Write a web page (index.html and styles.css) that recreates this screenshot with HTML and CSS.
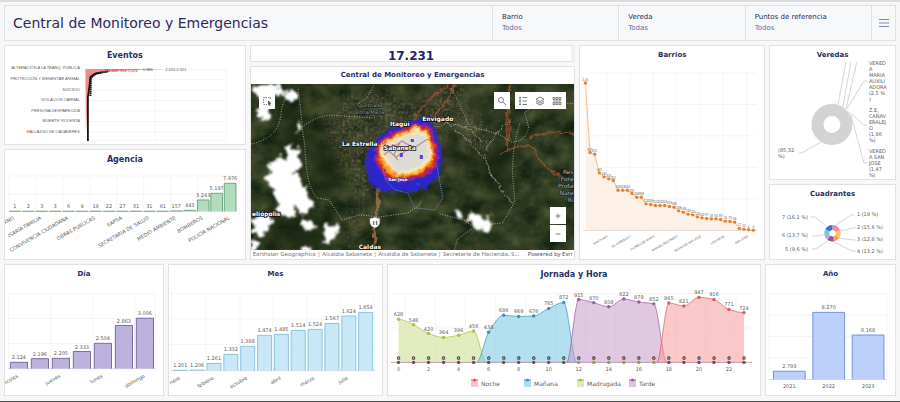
FILE: index.html
```html
<!DOCTYPE html>
<html lang="es">
<head>
<meta charset="utf-8">
<meta name="viewport" content="width=device-width, initial-scale=1">
<title>Central de Monitoreo y Emergencias</title>
<link rel="stylesheet" href="styles.css">
</head>
<body>
<header class="topbar">
  <h1>Central de Monitoreo y Emergencias</h1>
  <button class="filter" type="button"><span>Barrio</span><span class="value">Todos</span></button>
  <button class="filter" type="button"><span>Vereda</span><span class="value">Todas</span></button>
  <button class="filter" type="button"><span>Puntos de referencia</span><span class="value">Todos</span></button>
  <button class="menu" type="button" aria-label="Menú"><svg viewBox="0 0 10 8"><path d="M0 .5h10M0 4h10M0 7.500h10"/></svg></button>
</header>
<main>
  <div class="row upper">
    <div class="stack">
      <section class="card"><h2 class="large">Eventos</h2><svg id="eventos" viewBox="5 66 240 79"></svg></section>
      <section class="card"><h2 class="large">Agencia</h2><svg id="agencia" viewBox="5 171 240 89"></svg></section>
    </div>
    <div class="stack">
      <section class="card kpi">17.231</section>
      <section class="card mapcard">
        <h2>Central de Monitoreo y Emergencias</h2>
        <div class="map">
          <svg id="mapa" viewBox="251 83 324 168" preserveAspectRatio="xMidYMid slice">
            <defs>
              <filter id="terrain" x="0" y="0" width="100%" height="100%" color-interpolation-filters="sRGB">
                <feTurbulence type="fractalNoise" baseFrequency=".05 .06" numOctaves="6" seed="8"/>
                <feColorMatrix values=".35 .1 0 0 -.04  .3 .12 0 0 .02  .2 .08 0 0 -.01  0 0 0 0 1"/>
              </filter>
              <filter id="grain" x="0" y="0" width="100%" height="100%" color-interpolation-filters="sRGB">
                <feTurbulence type="fractalNoise" baseFrequency=".35" numOctaves="3" seed="3" result="n"/>
                <feColorMatrix in="n" values=".6 0 0 0 .1  .55 0 0 0 .08  .4 0 0 0 .08  0 2 0 0 -.5" result="c"/>
                <feGaussianBlur in="SourceAlpha" stdDeviation="6" result="a"/>
                <feComposite in="c" in2="a" operator="in"/>
              </filter>
              <filter id="cloud" x="-20%" y="-20%" width="140%" height="140%">
                <feTurbulence type="fractalNoise" baseFrequency=".13" numOctaves="4" seed="5"/>
                <feDisplacementMap in="SourceGraphic" scale="13" xChannelSelector="R" yChannelSelector="G"/>
                <feGaussianBlur stdDeviation=".8"/>
              </filter>
              <filter id="rough" x="-10%" y="-10%" width="120%" height="120%">
                <feTurbulence type="fractalNoise" baseFrequency=".16" numOctaves="3" seed="2"/>
                <feDisplacementMap in="SourceGraphic" scale="6" xChannelSelector="R" yChannelSelector="G"/>
              </filter>
              <filter id="soft"><feGaussianBlur stdDeviation="1.2"/></filter>
              <filter id="shade"><feGaussianBlur stdDeviation="7"/></filter>
            </defs>
            <rect x="251" y="83" width="324" height="168" fill="#2c3821"/>
            <rect x="251" y="83" width="324" height="168" filter="url(#terrain)" opacity=".9"/>
            <g fill="#14200f" opacity=".6" filter="url(#shade)">
              <path d="M283 85l20 2 6 65-16 30-14-30zM305 150l32-16 10 50-22 20zM478 150l28-16 10 40-18 32-15-25zM255 235l50-30 30 40-60 10z"/>
            </g>
            <g filter="url(#grain)" opacity=".6">
              <path d="M340 96l45-5 25 12 40-24 22 4-18 32-14 35-42 18-32 30-10 52h-10l8-60-30-55zM450 100l38 20 5 35-30-8z"/>
            </g>
            <g fill="none" stroke="#a75235" opacity=".7" filter="url(#rough)">
              <path d="M456 83q-10 28-40 46M450 84q-22 14-40 40M510 84q-4 30-3 60M500 155q22-14 34-6 10 22 28 28M508 95q4 25 0 55M530 138q20-8 45-4" stroke-width="1.800"/>
              <path d="M378 188q2 20-4 40l2 22" stroke="#b97852" stroke-width="3"/>
              <path d="M455 130q20 14 30 30M428 132q30-20 55 10M487 150q10-20 24-30M485 155q5 24 28 48" stroke="#a9a79b"/>
            </g>
            <g fill="#0c120a" opacity=".7" filter="url(#cloud)"><path d="M447 213l14 3 16 12-6 2-20-8zM285 92l12 4-4 12zM300 200l10 8-2 10z"/></g>
            <g fill="#fff" filter="url(#cloud)">
              <path d="M252 86l28-2 4 9-12 6-18-2zM286 88l8 2 4 8-6 4-8-7zM258 108l11-3 4 10-13 6zM286 148l13-3 3 20-8 10-8-8zM270 165l14-9 8 18 12 6 9 27-12 7-6-12-2 16-14-4-5-22-8-12zM252 218l18-4 3 11-14 14-8-8zM302 219l9-1 2 10-10 4zM326 227l12-5 1 12-10 11-6-7zM299 121l4 8-6 2zM470 214l10 1 4 4 7-7v12l-5 8-10-5-8-8zM454 211l9 2-4 7zM251 238l5 2 2 11h-7zM302 246l6 1v4h-6z"/>
            </g>
            <g fill="none" stroke="#d6d8c9" stroke-width=".7" stroke-dasharray="1 1.500">
              <path d="M251 144q28-6 30-30 2-18 12-22M298 89q4 30 4 37l3 20q1 40 12 52l12 2 10 15 3 5 18-5 20 2 28-4 12-8 1-4"/>
              <path d="M302 127q18-15 42-11l32 2M375 83l-8 15-10 6M451 88q12 20 18 38l30 8 13 8q14 0 17-15l-4-15 20-12 30 4M520 124q-8 25-7 52l2 26-12 21q-20 2-28 4l-17 12-4 12M440 214l24 6 8 6"/>
            </g>
            <g filter="url(#rough)">
              <g filter="url(#soft)">
                <path d="M371 147l18-16 26-11 14 2 8 16 4 20-4 18-12 11-14 4-16-2-13 1-12-10-3-18z" fill="#2a26c9" stroke="#2a26c9" stroke-width="3"/>
                <path d="M375 147l16-13 24-10 13 2 7 14 3 17-5 12-11 8-18 4-16-1-11-17z" fill="#d32313"/>
                <path d="M378 147l15-10 23-10 11 3 5 13 3 12-5 11-11 8-20 4-11-5-9-15z" fill="#ff9d1c"/>
                <path d="M380 147l15-8 21-10 10 3 4 12 2 11-5 9-10 7-18 4-9-7-8-12z" fill="#fff3b0"/>
                <path d="M382 147l15-7 20-9 8 4 3 10 1 10-5 8-9 6-17 4-7-7-7-11z" fill="#dedbd7"/>
              </g>
            </g>
            <path d="M384 155l18-14 12 7 14-9M388 150l8 7 18-11M400 143l-6 12 4 5" fill="none" stroke="#a77768" stroke-width="1.200" opacity=".75"/>
            <path d="M384 167q-2 13 12 23l12 3 7 15 20 2 8-12-6-33" fill="none" stroke="#6f93d8" stroke-width=".9" stroke-dasharray="1 1"/>
            <g fill="#5a3fe0"><path d="M411 139h3v3h-3zM420 155h3v4h-3zM400 153h3v4h-3zM417 183h2v2h-2zM384 169h2v3h-2z"/></g>
            <path d="M370 218q2 1 5-1 3 2 5 1v5q-1 4-5 5-4-1-5-5z" fill="#fff" stroke="#777" stroke-width=".5"/>
            <path d="M373 221h1.500v4H373zM376 221h1.500v4H376z" fill="#777"/>
            <g class="place">
              <text x="400" y="126">Itagüí</text><text x="438" y="121">Envigado</text>
              <text x="360" y="146">La Estrella</text><text x="400" y="150">Sabaneta</text>
              <text x="370" y="249">Caldas</text><text class="begin" x="252" y="216">eliópolis</text>
            </g>
            <g class="place minor">
              <text x="370" y="107">Quebrada</text><text x="370" y="114">Doña María</text>
            </g>
            <g class="place spot"><text x="398" y="181">San José</text></g>
            <g class="place reserve">
              <text x="574" y="174">Res</text><text x="574" y="181">Fore</text><text x="574" y="188">Prote</text><text x="574" y="195">Nare</text><text x="574" y="202">Rí</text>
            </g>
          </svg>
          <button class="tool select" type="button" aria-label="Seleccionar"><svg viewBox="0 0 16 16"><path d="M4.500 10V4.500h7V7M4.500 11.500H8" stroke-dasharray="1.500 1"/><path class="solid" d="M9 7.500l3.500 3-1.500.3.800 1.700-1 .4-.8-1.600-1 1z"/></svg></button>
          <div class="tools">
            <button class="tool" type="button" aria-label="Buscar"><svg viewBox="0 0 16 16"><circle cx="7" cy="7" r="2.500"/><path d="M9 9l3 3"/></svg></button>
            <div class="group">
              <button class="tool" type="button" aria-label="Leyenda"><svg viewBox="0 0 16 16"><path d="M4 4.500h2M4 8h2M4 11.500h2M7.500 4.500H12M7.500 8H12M7.500 11.500H12M5 4v8"/></svg></button>
              <button class="tool" type="button" aria-label="Capas"><svg viewBox="0 0 16 16"><path d="M8 4l4 2.200L8 8.500 4 6.200zM4 8l4 2.300L12 8M4 9.800L8 12l4-2.200"/></svg></button>
              <button class="tool" type="button" aria-label="Mapas base"><svg viewBox="0 0 16 16"><path d="M4 4.500h2v2H4zM7 4.500h2v2H7zM10 4.500h2v2h-2zM4 9.500h2v2H4zM7 9.500h2v2H7zM10 9.500h2v2h-2zM4 8h8"/></svg></button>
            </div>
          </div>
          <div class="zoom">
            <button class="tool" type="button" aria-label="Acercar"><svg viewBox="0 0 16 16"><path d="M5.500 8h5M8 5.500v5"/></svg></button>
            <button class="tool" type="button" aria-label="Alejar"><svg viewBox="0 0 16 16"><path d="M5.500 8h5"/></svg></button>
          </div>
        </div>
        <p class="credits"><span>Earthstar Geographics | Alcaldía Sabaneta | Alcaldía de Sabaneta | Secretaría de Hacienda, S...</span><a href="#esri">Powered by Esri</a></p>
      </section>
    </div>
    <section class="card"><h2>Barrios</h2><svg id="barrios" viewBox="581 66 184 194"></svg></section>
    <div class="stack">
      <section class="card"><h2>Veredas</h2><svg id="veredas" viewBox="770 66 125 114"></svg></section>
      <section class="card"><h2>Cuadrantes</h2><svg id="cuadrantes" viewBox="770 206 125 54"></svg></section>
    </div>
  </div>
  <div class="row lower">
    <section class="card"><h2>Día</h2><svg id="dia" viewBox="5 284 158 111"></svg></section>
    <section class="card"><h2>Mes</h2><svg id="mes" viewBox="169 284 213 111"></svg></section>
    <section class="card"><h2 class="large">Jornada y Hora</h2><svg id="jornada" viewBox="388 284 372 111"></svg></section>
    <section class="card"><h2>Año</h2><svg id="ano" viewBox="766 284 129 111"></svg></section>
  </div>
</main>
<script src="charts.js"></script>
</body>
</html>
```
FILE: styles.css
```css
* { box-sizing: border-box; }
body {
  margin: 0;
  min-height: 100vh;
  padding: 3px 4px 5px;
  border-top: 2px solid #dcdcde;
  border-bottom: 1px solid #4a4a4c;
  background: #f7f7f8;
  color: #2d2a5c;
  font-family: "DejaVu Sans", Verdana, sans-serif;
}
h1, h2, p { margin: 0; }
button {
  margin: 0;
  padding: 0;
  border: 0;
  background: none;
  color: inherit;
  font: inherit;
}
.topbar {
  display: flex;
  height: 36px;
  margin-bottom: 4px;
  border: 1px solid #dfe0e4;
  background: #f7f8fa;
}
h1 {
  flex: 1;
  padding-left: 8px;
  font-size: 14px;
  font-weight: 400;
  line-height: 35px;
  white-space: nowrap;
}
.filter {
  display: flex;
  flex-direction: column;
  justify-content: center;
  flex: 0 0 14.2%;
  padding-left: 9px;
  border-left: 1px solid #dfe0e4;
  font-size: 7px;
  line-height: 11px;
  text-align: left;
}
.filter .value { color: #6a68a6; }
.menu {
  width: 24px;
  border-left: 1px solid #dfe0e4;
}
.menu svg {
  display: block;
  width: 10px;
  height: 8px;
  margin: auto;
  stroke: #8583b0;
  stroke-width: 1;
}
.row { display: grid; gap: 4px; }
.upper {
  grid-template-columns: 242fr 326fr 186fr 127fr;
  margin-bottom: 4px;
}
.lower { grid-template-columns: 160fr 215fr 374fr 131fr; }
.stack {
  display: flex;
  flex-direction: column;
  gap: 4px;
  min-width: 0;
}
.card {
  min-width: 0;
  border: 1px solid #e2e2e5;
  background: #fff;
}
.stack .card:last-child { flex: 1; }
h2 {
  color: #1d2f66;
  font-size: 7px;
  font-weight: 700;
  line-height: 19px;
  text-align: center;
}
h2.large { font-size: 8px; }
.card > svg { display: block; width: 100%; }
#veredas { overflow: visible; }
.kpi {
  height: 17px;
  border-right: 4px solid #f0f0f1;
  color: #2a1f66;
  font-size: 12px;
  font-weight: 700;
  line-height: 20px;
  text-align: center;
}
.mapcard { display: flex; flex-direction: column; }
.mapcard h2 { line-height: 17px; }
.map {
  position: relative;
  flex: 1;
  min-height: 166px;
  overflow: hidden;
}
.map > svg {
  position: absolute;
  width: 100%;
  height: 100%;
}
.tool {
  display: block;
  width: 16px;
  height: 17px;
  background: #fff;
}
.tool svg {
  display: block;
  width: 16px;
  height: 16px;
  fill: none;
  stroke: #808080;
  stroke-width: 1;
}
.tool .solid { fill: #555; stroke: none; }
.select {
  position: absolute;
  top: 8px;
  left: 8px;
  border-radius: 1px;
}
.tools {
  position: absolute;
  top: 8px;
  right: 8px;
  display: flex;
  gap: 5px;
}
.group { display: flex; }
.group .tool { width: 17px; }
.zoom {
  position: absolute;
  right: 8px;
  bottom: 8px;
  display: flex;
  flex-direction: column;
  gap: 1px;
}
.credits {
  display: flex;
  justify-content: space-between;
  height: 9px;
  padding: 0 2px;
  color: #777;
  font-family: "Noto Sans", sans-serif;
  font-size: 6px;
  line-height: 9px;
  white-space: nowrap;
}
.credits a { color: #555; text-decoration: none; }
.place text {
  fill: #fff;
  stroke: #111;
  stroke-width: 1.5px;
  paint-order: stroke;
  font-size: 6px;
  font-weight: 700;
  text-anchor: middle;
}
.place .begin { text-anchor: start; }
.minor text { font-size: 5px; fill: #8fb0b5; stroke-width: 1px; font-weight: 400; }
.spot text { font-size: 4px; stroke: #2a26c9; stroke-width: 1px; }
.reserve text { fill: #bbb; stroke-width: 1px; font-weight: 400; text-anchor: end; }
.t3, .t4, .t5, .t6 { fill: #5c5c5c; font-size: 5px; }
.t3, .t4 { font-family: "Liberation Sans", Arial, sans-serif; font-size: 4px; }
.t3 { font-size: 3px; }
.t6 { font-size: 6px; }
.zero { fill: #222; font-size: 5px; font-weight: 700; }
.grid { fill: none; stroke: #f5f5f6; stroke-width: 1; }
.axis { fill: none; stroke: #dcdcdf; stroke-width: 1; }
.leader { fill: none; stroke: #b8b8b8; stroke-width: .6; }
```
FILE: charts.js
```javascript
const put = (id, html) => { document.getElementById(id).innerHTML = html; };
const text = (x, y, s, anchor = 'middle', cls = 't5') =>
  `<text class="${cls}" x="${x}" y="${y}" text-anchor="${anchor}">${s}</text>`;
const slanted = (x, y, s, cls = 't5') =>
  `<text class="${cls}" text-anchor="end" transform="translate(${x} ${y}) rotate(-30)">${s}</text>`;
const grid = (xs, ys, [l, t, r, b]) =>
  `<path class="grid" d="${xs.map(x => `M${x} ${t}V${b}`).join('')}${ys.map(y => `M${l} ${y}H${r}`).join('')}"/>`;
const axis = (l, r, y) => `<path class="axis" d="M${l} ${y}H${r}"/>`;
const bars = ({ x0, step, w, base, tops, labels, fill, stroke }) =>
  tops.map((top, i) => {
    const x = x0 + step * i;
    return `<path d="M${x} ${base}V${top}H${x + w}V${base}" fill="${fill}" stroke="${stroke}" stroke-width=".8"/>` +
      text(x + w / 2, top - 3, labels[i]);
  }).join('');

/* Eventos */
const eventNames = ['ALTERACIÓN A LA TRANQ. PUBLICA', 'PROTECCIÓN Y BIENESTAR ANIMAL', 'SUICIDIO', 'VIOLACION CARNAL',
  'PERSONA DESPARECIDA', 'MUERTE VIOLENTA', 'HALLAZGO DE CADAVERES'];
put('eventos',
  grid([155.5, 226.5], [70.5, 80.5, 91, 101.5, 112, 122.5, 133, 141.5], [86, 70, 227, 142]) +
  eventNames.map((s, i) => text(80, 70.5 + 10.6 * i, s, 'end', 't4')).join('') +
  '<path d="M85.500 70H166l-30 1-25 1.500-15 3-6 5-2 14-1 20-1 20z" fill="#f28a8a"/>' +
  '<path d="M88 142V98l1.500-10 1-10 4-3 7-1.500" fill="none" stroke="#151515" stroke-width="1.800"/>' +
  '<path d="M90.500 97l.5-18 5-4.500 12-2" fill="none" stroke="#151515" stroke-width="2" stroke-dasharray="1.500 .4"/>' +
  text(111, 73.5, '286 321', 'middle', 't4') + text(129, 72.8, '514 1.026', 'middle', 't4') +
  text(148, 72.5, '1.986', 'middle', 't4') + text(176, 72, '2.254 2.521', 'middle', 't4'));

/* Agencia */
const agencyNames = ['RNO', 'ISARÍA FAMILIA', 'CONVIVENCIA CIUDADANA', 'OBRAS PUBLICAS', 'EAPSA',
  'SECRETARIA DE SALUD', 'MEDIO AMBIENTE', 'BOMBEROS', 'POLICÍA NACIONAL'];
put('agencia',
  grid([9, 36, 63, 90, 117, 144, 171, 198, 225], [178, 196], [9, 178, 237, 213]) + axis(9, 237, 213.5) +
  bars({ x0: 9, step: 13.47, w: 11.7, base: 213.3,
    tops: [...Array(12).fill(213.3), 213, 212.3, 202, 195.3, 185.3],
    labels: ['1', '2', '3', '3', '6', '9', '19', '22', '27', '31', '31', '61', '157', '443', '3.243', '5.197', '7.976'],
    fill: '#b1dcbd', stroke: '#4f9768' }) +
  agencyNames.map((s, i) => slanted(14.500 + 27 * i, 221, s)).join(''));

/* Barrios */
const by = [132, 341, 346, 402, 414, 420, 425, 454, 454, 454, 464, 475, 475, 495, 497, 500, 500, 500, 503, 505, 516, 520,
  526, 528, 534, 537, 539, 540, 540, 542, 547, 548, 550, 569, 571, 573, 574];
const bp = by.map((y, i) => [586.4 + 4.67 * i, 40 + y / 3]);
put('barrios',
  grid([584, 607.5, 631, 654.5, 677.5, 701, 724.5, 748], [74, 105.500, 137, 168.500, 200], [584, 74, 758, 231]) +
  axis(584, 758, 231.7) +
  `<path d="M586.400 231.500L${bp.map(p => p.join(' ')).join('L')}V231.500z" fill="#fdf0e6"/>` +
  `<path d="M${bp.map(p => p.join(' ')).join('L')}" fill="none" stroke="#f0a563" stroke-width=".7"/>` +
  bp.map(([x, y], i) => `<circle cx="${x}" cy="${y}" r="1.700" fill="#e6842b"/>` +
    text(x, y - 2, i === 0 ? '1,5k' : Math.max(1, Math.round((231.8 - y) * 8)), 'middle', 't3')).join('') +
  ['SANTA ANA', 'EL CARMELO II', 'FLORES DE MARIA', 'MANUEL RESTREPO', 'VEGAS DE SAN JOSE', 'LOS ARIAS', 'SAN JOSE']
    .map((s, i) => slanted(609 + 23.4 * i, 238, s, 't3')).join(''));

/* Veredas */
const lines = (x, y, list) => list.map((s, i) => text(x, y + 6 * i, s, 'start')).join('');
put('veredas',
  '<circle cx="832" cy="125.500" r="14.500" fill="none" stroke="#d3d3d3" stroke-width="12"/>' +
  '<path class="leader" d="M838 106l8-43M843 108l8-45M846 110l11-47M847 110l17-28h3M849 113l15 13h3M851 116l13 48h4M821 143l-19 11h-3"/>' +
  lines(869, 66, ['VERED', 'A', 'MARIA', 'AUXILI', 'ADORA', '(2,5 %', ')']) +
  lines(869, 113, ['Z.E.', 'CAÑAV', 'ERALEJ', 'O', '(1,86', '%)']) +
  lines(869, 154, ['VERED', 'A SAN', 'JOSE', '(1,47', '%)']) +
  lines(778, 153, ['(85,32', '%)']));

/* Cuadrantes */
const shares = [[19, '#f58a9a'], [15.6, '#f9c567'], [12.8, '#f0a04b'], [13.2, '#9a4b9d'], [9.6, '#c9a0d8'], [13.7, '#6cc6ee'], [16.1, '#3d74c6']];
let turn = 0;
const ring = shares.map(([v, color]) => {
  const at = f => { const a = f / 100 * 2 * Math.PI; return `${832.5 + 5.8 * Math.sin(a)} ${235.3 - 5.8 * Math.cos(a)}`; };
  const d = `M${at(turn)}A5.8 5.8 0 0 1 ${at(turn + v)}`;
  turn += v;
  return `<path d="${d}" fill="none" stroke="${color}" stroke-width="5"/>`;
}).join('');
put('cuadrantes', ring +
  '<path class="leader" d="M836 227l15-10h4M841 233l11-3h4M839 240l13 2h4M834 244l18 9h4M826 228l-11-9h-4M824 237l-8 1h-4M828 243l-12 8h-4"/>' +
  [[857, 218.5, '1 (19 %)'], [857, 231.5, '2 (15,6 %)'], [857, 243.5, '3 (12,8 %)'], [857, 255.5, '4 (13,2 %)']]
    .map(([x, y, s]) => text(x, y, s, 'start')).join('') +
  [[808, 221, '7 (16,1 %)'], [808, 239.5, '6 (13,7 %)'], [808, 253.5, '5 (9,6 %)']].map(([x, y, s]) => text(x, y, s, 'end')).join(''));

/* Día */
put('dia',
  grid([8.5, 50.5, 92.500, 134.500, 155.500], [293.500, 318.500, 343.500], [8, 293, 156, 368]) + axis(8, 156, 368.7) +
  bars({ x0: 10.3, step: 21, w: 17.2, base: 368.6, tops: [362.3, 358.7, 358.3, 351.5, 343.3, 325.5, 318.2],
    labels: ['2.124', '2.196', '2.205', '2.333', '2.504', '2.863', '3.006'], fill: '#bdb2de', stroke: '#5f5391' }) +
  ['rcoles', 'jueves', 'lunes', 'domingo'].map((s, i) => slanted(18.5 + 42.2 * i, 377, s)).join(''));

/* Mes */
put('mes',
  grid([171.5, 206, 240, 273, 307, 340, 374], [293.500, 319, 344.500], [170, 293, 375, 370]) + axis(170, 375, 370.7) +
  bars({ x0: 173.3, step: 16.85, w: 14, base: 370.6,
    tops: [370.3, 370, 363.4, 354.4, 346.4, 335.4, 334.4, 330.4, 329.4, 323.4, 316, 312.4],
    labels: ['1.201', '1.206', '1.261', '1.332', '1.388', '1.474', '1.485', '1.514', '1.524', '1.567', '1.624', '1.654'],
    fill: '#c8e8f8', stroke: '#74b9d6' }) +
  ['nero', 'febrero', 'octubre', 'abril', 'marzo', 'julio'].map((s, i) => slanted(180.5 + 33.6 * i, 379, s)).join(''));

/* Jornada y Hora */
const base = 362.4;
const hx = h => 398.5 + 15.02 * h;
const hy = v => base - v * 0.0687;
function curve(pts) {
  const slope = pts.map((p, i) => {
    if (i === 0 || i === pts.length - 1) return 0;
    const a = (p[1] - pts[i - 1][1]) / (p[0] - pts[i - 1][0]);
    const b = (pts[i + 1][1] - p[1]) / (pts[i + 1][0] - p[0]);
    return a * b <= 0 ? 0 : 2 * a * b / (a + b);
  });
  return 'M' + pts[0].join(' ') + pts.slice(1).map((p, i) => {
    const q = pts[i], d = (p[0] - q[0]) / 3;
    return `C${q[0] + d} ${q[1] + slope[i] * d} ${p[0] - d} ${p[1] - slope[i + 1] * d} ${p[0]} ${p[1]}`;
  }).join('');
}
const series = [
  { start: 0, values: [628, 548, 420, 364, 396, 456], fill: '#cbdc8a', stroke: '#a9bf45' },
  { start: 6, values: [438, 686, 669, 676, 785, 872], fill: '#74c6e2', stroke: '#3796b5' },
  { start: 12, values: [915, 870, 809, 922, 879, 852], fill: '#c79bc9', stroke: '#9b5b9f' },
  { start: 18, values: [865, 821, 947, 916, 771, 724], fill: '#f59a9d', stroke: '#dc5a60' }
];
let hours = grid([0, 2, 4, 6, 8, 10, 12, 14, 16, 18, 20, 22].map(h => hx(h) + 7), [293.5, 328], [391, 293, 752, 362]);
series.forEach(s => {
  const pts = s.values.map((v, i) => [hx(s.start + i), hy(v)]);
  const all = [...pts];
  if (s.start > 0) all.unshift([hx(s.start - 1) + 3, base]);
  if (s.start < 18) all.push([hx(s.start + 6) - 2, base]);
  const d = curve(all);
  hours += `<path d="${d}V${base}H${all[0][0]}z" fill="${s.fill}" fill-opacity=".55"/><path d="${d}" fill="none" stroke="${s.stroke}" stroke-width=".7"/>` +
    pts.map(([x, y], i) => `<circle cx="${x}" cy="${y}" r="1.700" fill="${s.stroke}"/>` + text(x, y - 3, s.values[i])).join('');
});
hours += `<path d="M391 ${base}H752" stroke="#a77c9b" stroke-width=".7"/>`;
for (let h = 0; h < 24; h++) {
  hours += `<circle cx="${hx(h)}" cy="${base}" r="1.700" fill="${h > 11 && h < 18 ? '#91a343' : '#70495e'}"/>` +
    text(hx(h), 360, '0', 'middle', 'zero');
  if (h % 2 === 0) hours += text(hx(h), 370.5, h);
}
[[471, 'Noche', 3], [524, 'Mañana', 1], [577, 'Madrugada', 0], [629, 'Tarde', 2]].forEach(([x, name, k]) => {
  const s = series[k];
  hours += `<path d="M${x} 380h7v7h-7z" fill="${s.fill}" fill-opacity=".6"/><path d="M${x} 380h7" stroke="${s.stroke}"/>` +
    `<circle cx="${x + 3.5}" cy="380" r="1.500" fill="${s.stroke}"/>` + text(x + 10, 386, name, 'start', 't6');
});
put('jornada', hours);

/* Año */
put('ano',
  grid([769, 828, 887], [293.500, 315, 336.500, 358], [769, 293, 887, 379]) + axis(769, 887, 379.5) +
  bars({ x0: 773.4, step: 39.4, w: 31.8, base: 379.4, tops: [371.2, 312.4, 335], labels: ['2.793', '8.270', '6.168'],
    fill: '#bdd0fb', stroke: '#5a7fd6' }) +
  ['2021', '2022', '2023'].map((s, i) => text(789.3 + 39.4 * i, 387.5, s)).join(''));
```
